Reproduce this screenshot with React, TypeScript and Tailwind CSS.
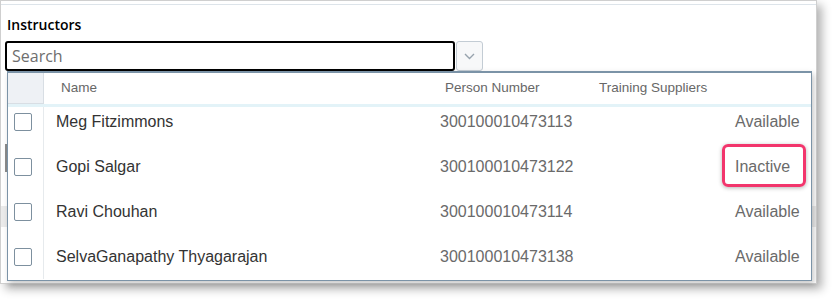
import React from "react";

const rows = [
  { name: "Meg Fitzimmons", num: "300100010473113", status: "Available" },
  { name: "Gopi Salgar", num: "300100010473122", status: "Inactive" },
  { name: "Ravi Chouhan", num: "300100010473114", status: "Available" },
  { name: "SelvaGanapathy Thyagarajan", num: "300100010473138", status: "Available" },
];

export default function App() {
  return (
    <div className="relative w-[832px] h-[301px] bg-white overflow-hidden">
      {/* card */}
      <div className="w-[817px] h-[284px] bg-white border border-[#cfcfcf] shadow-[5px_5px_9px_rgba(0,0,0,0.3)] flex flex-col">
        <div className="h-[3px]" />
        <div className="h-[1px] bg-[#dde4ea]" />
        <div
          className="mt-[10px] ml-[6px] h-[20px] leading-[20px] text-[14px] font-semibold text-black"
          style={{ fontFamily: '"Open Sans", "Noto Sans", sans-serif' }}
        >
          Instructors
        </div>
        <div className="mt-[6px] ml-[4px] flex">
          <div
            className="w-[450px] h-[30px] border-2 border-black rounded-[3px] pl-[5px] flex items-center text-[16px] text-[#6e6e6e]"
            style={{ fontFamily: '"Open Sans", "Noto Sans", sans-serif' }}
          >
            Search
          </div>
          <div className="ml-[1px] w-[27px] h-[30px] border border-[#c3ccd4] rounded-[3px] bg-[#f7f8f9] flex items-center justify-center">
            <svg width="11" height="7" viewBox="0 0 11 7">
              <polyline points="1,1 5.5,5.5 10,1" fill="none" stroke="#97a3ad" strokeWidth="1.4" />
            </svg>
          </div>
        </div>
        {/* underlying content, covered by the popup */}
        <div className="mt-[73px] ml-[4px] h-[28px] w-[200px] border-l-2 border-[#8c8c8c]" />
        <div className="mt-[34px] h-[21px] bg-[#ebebeb]" />
      </div>

      {/* dropdown popup */}
      <div
        className="absolute left-[7px] top-[71px] w-[805px] h-[210px] bg-white border border-t-2 border-[#7b93a7] shadow-[2px_3px_6px_rgba(0,0,0,0.22)] flex flex-col"
        style={{ fontFamily: '"Liberation Sans", Arial, sans-serif' }}
      >
        <div className="h-[31px] flex items-stretch text-[13.5px] text-[#676767]">
          <div className="w-[36px] bg-[#eef1f5] border-r border-b border-[#d8dee4]" />
          <div className="w-[396px] pl-[17px] flex items-center">Name</div>
          <div className="w-[159px] pl-[5px] flex items-center">Person Number</div>
          <div className="flex-1 flex items-center">Training Suppliers</div>
        </div>
        <div className="h-[3px] bg-[#e3f3f8]" />
        <div className="h-[173px] overflow-hidden">
          <div className="-mt-[8px] flex flex-col">
            {rows.map((r) => (
              <div key={r.num} className="h-[45px] flex items-stretch text-[16px]">
                <div className="w-[36px] border-r border-[#e6eaed] flex items-center pl-[6px]">
                  <div className="w-[18px] h-[18px] border border-[#7d909f] rounded-[2px] bg-white" />
                </div>
                <div className="w-[396px] pl-[12px] flex items-center text-[#333333]">{r.name}</div>
                <div className="w-[295px] flex items-center text-[#6a6a6a]">{r.num}</div>
                <div className="flex-1 flex items-center text-[#6a6a6a]">{r.status}</div>
              </div>
            ))}
          </div>
        </div>
      </div>

      {/* annotation highlight */}
      <div className="absolute left-[722px] top-[144px] w-[84px] h-[43px] border-[3px] border-[#f2356c] rounded-[6px] shadow-[0_1px_4px_rgba(0,0,0,0.3)]" />
    </div>
  );
}
